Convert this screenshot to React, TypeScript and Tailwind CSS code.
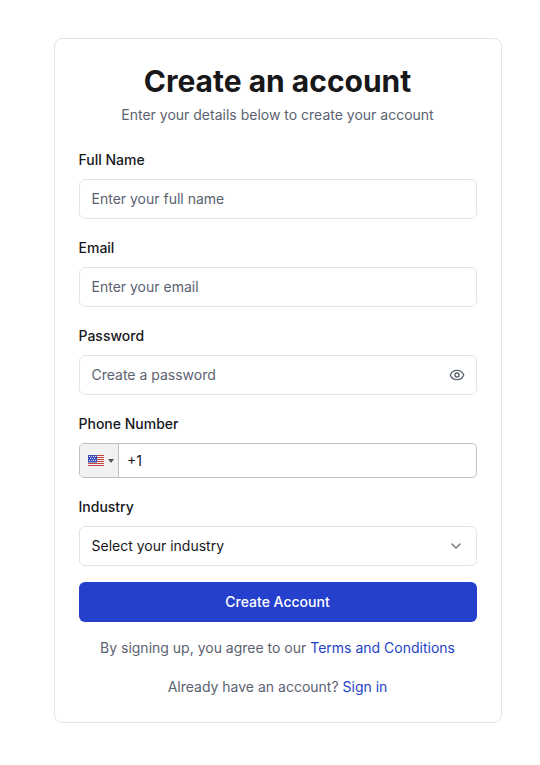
import { ChevronDown, Eye } from 'lucide-react';

function UsFlag() {
  return (
    <svg width="16" height="11" viewBox="0 0 16 11" className="shrink-0">
      <rect width="16" height="11" fill="#f0f0f4" />
      <rect y="0" width="16" height="1" fill="#c8443f" />
      <rect y="2" width="16" height="1" fill="#c8443f" />
      <rect y="4" width="16" height="1" fill="#c8443f" />
      <rect y="6" width="16" height="1" fill="#c8443f" />
      <rect y="8" width="16" height="1" fill="#c8443f" />
      <rect y="10" width="16" height="1" fill="#c8443f" />
      <rect width="9" height="7.5" fill="#3c4fb5" />
      <rect x="1" y="1" width="1" height="1" fill="#dfe3f5" />
      <rect x="3" y="1" width="1" height="1" fill="#dfe3f5" />
      <rect x="5" y="1" width="1" height="1" fill="#dfe3f5" />
      <rect x="7" y="1" width="1" height="1" fill="#dfe3f5" />
      <rect x="2" y="3" width="1" height="1" fill="#dfe3f5" />
      <rect x="4" y="3" width="1" height="1" fill="#dfe3f5" />
      <rect x="6" y="3" width="1" height="1" fill="#dfe3f5" />
      <rect x="1" y="5" width="1" height="1" fill="#dfe3f5" />
      <rect x="3" y="5" width="1" height="1" fill="#dfe3f5" />
      <rect x="5" y="5" width="1" height="1" fill="#dfe3f5" />
      <rect x="7" y="5" width="1" height="1" fill="#dfe3f5" />
    </svg>
  );
}

function Field({ label, children }: { label: string; children: React.ReactNode }) {
  return (
    <div>
      <label className="block text-sm leading-5 font-medium text-[#18181b] mb-[9px] -translate-x-[0.5px]">{label}</label>
      {children}
    </div>
  );
}

function TextBox({ text, dark, icon }: { text: string; dark?: boolean; icon?: React.ReactNode }) {
  return (
    <div className={dark ? 'h-10 flex items-center justify-between px-3 rounded-md border border-[#e4e4e7] bg-white text-sm text-[#18181b]' : 'h-10 flex items-center justify-between px-3 rounded-md border border-[#e4e4e7] bg-white text-sm text-[#5b6270]'}>
      <span className="-translate-x-[0.5px]">{text}</span>
      {icon}
    </div>
  );
}

export default function App() {
  return (
    <div className="w-[540px] h-[765px] bg-white pt-[38px] font-['Inter',sans-serif]">
      <div className="w-[448px] h-[685px] ml-[54px] rounded-lg border border-[#e4e4e7] px-6 pt-6">
        <h1 className="text-[30px] leading-9 font-bold text-center text-[#18181b] -translate-x-[0.5px]">Create an account</h1>
        <p className="mt-[6px] text-sm leading-5 text-center text-[#5b6270] -translate-x-[0.5px]">
          Enter your details below to create your account
        </p>
        <div className="mt-[25px] flex flex-col gap-[19px]">
          <Field label="Full Name">
            <TextBox text="Enter your full name" />
          </Field>
          <Field label="Email">
            <TextBox text="Enter your email" />
          </Field>
          <Field label="Password">
            <TextBox text="Create a password" icon={<Eye className="w-4 h-4 text-[#5b6270] translate-x-[1px]" />} />
          </Field>
          <Field label="Phone Number">
            <div className="h-[35px] flex rounded-[5px] border border-[#c0c0c0] bg-white overflow-hidden">
              <div className="w-[39px] flex items-center pl-[8px] gap-[4px] bg-[#f1f1f1] border-r border-[#c0c0c0]">
                <UsFlag />
                <span className="w-0 h-0 border-x-[3px] border-x-transparent border-t-[4px] border-t-[#555]" />
              </div>
              <span className="flex items-center pl-2 text-sm text-[#18181b] -translate-y-[0.5px]">+1</span>
            </div>
          </Field>
          <Field label="Industry">
            <TextBox text="Select your industry" dark icon={<ChevronDown className="w-4 h-4 text-[#71717a]" />} />
          </Field>
        </div>
        <button className="mt-4 w-full h-10 rounded-md bg-[#2540cc] text-white text-sm font-medium">
          <span className="inline-block -translate-x-[0.5px]">Create Account</span>
        </button>
        <p className="mt-4 text-sm leading-5 text-center text-[#5b6270] -translate-x-[0.5px]">
          By signing up, you agree to our <a className="text-[#1d3fc9]">Terms and Conditions</a>
        </p>
        <p className="mt-[19px] text-sm leading-5 text-center text-[#5b6270] -translate-x-[0.5px]">
          Already have an account? <a className="text-[#1d3fc9]">Sign in</a>
        </p>
      </div>
    </div>
  );
}
